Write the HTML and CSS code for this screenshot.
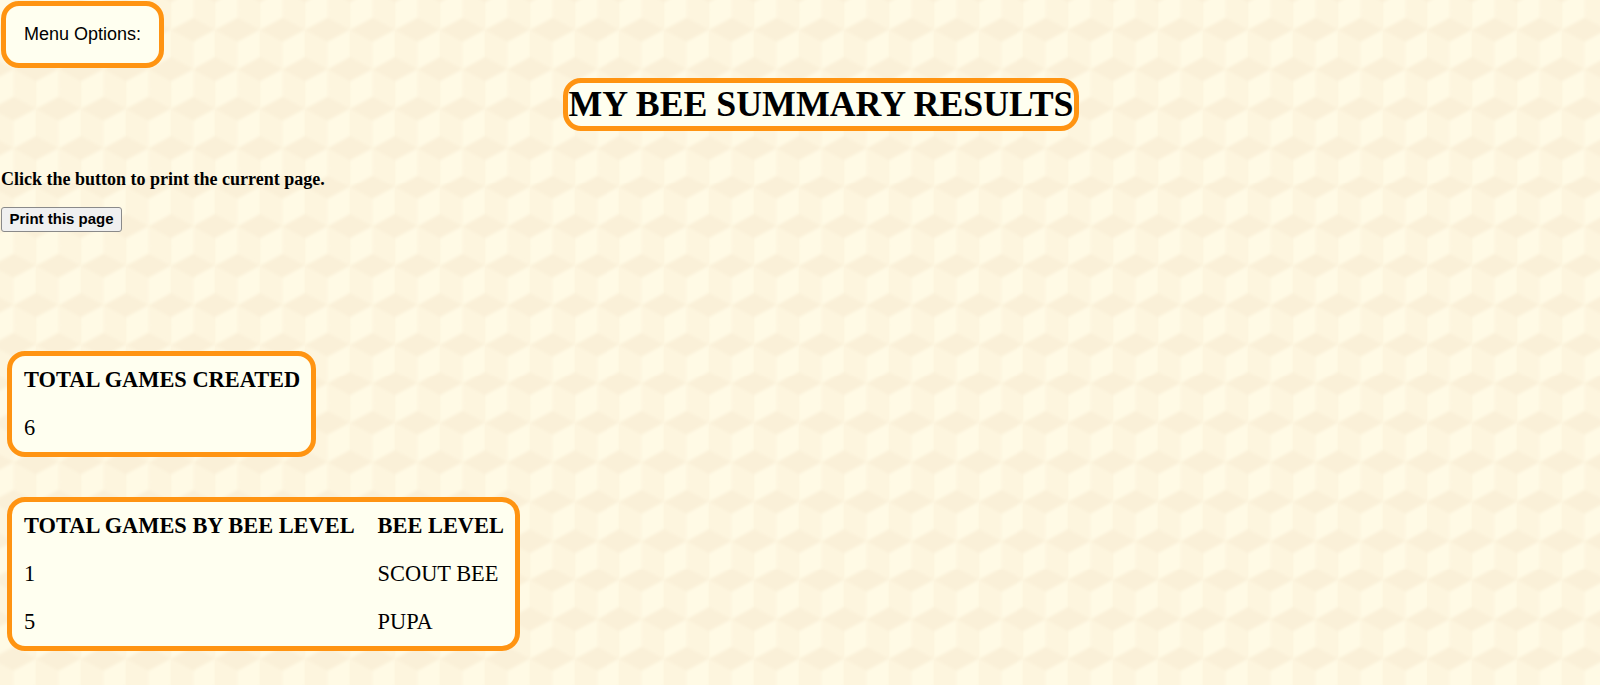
FILE: index.html
```html
<!DOCTYPE html>
<html lang="en">
<head>
    <meta charset="UTF-8">
    <title>My Bee Summary Results</title>
    <link rel="stylesheet" href="styles.css">
</head>
<body>
    <div class="menu">Menu Options:</div>
    <h1><span class="title">MY BEE SUMMARY RESULTS</span></h1>
    <p class="print-note">Click the button to print the current page.</p>
    <button class="print-btn">Print this page</button>

    <table class="summary summary-first">
        <tr><th>TOTAL GAMES CREATED</th></tr>
        <tr><td>6</td></tr>
    </table>

    <table class="summary">
        <tr><th>TOTAL GAMES BY BEE LEVEL</th><th>BEE LEVEL</th></tr>
        <tr><td>1</td><td>SCOUT BEE</td></tr>
        <tr><td>5</td><td>PUPA</td></tr>
    </table>
</body>
</html>
```

FILE: styles.css
```css
body {
    margin: 0;
    padding: 1px 0 0 1px;
    font-family: "Liberation Serif", "Times New Roman", serif;
    color: #000;
    background-color: #fdf5de;
    background-image: url("data:image/svg+xml,%3Csvg xmlns='http://www.w3.org/2000/svg' width='450' height='786' viewBox='0 0 450 786'%3E%3Cdefs%3E%3Cfilter id='b' x='-20%25' y='-20%25' width='140%25' height='140%25'%3E%3CfeGaussianBlur stdDeviation='14'/%3E%3C/filter%3E%3C/defs%3E%3Crect width='450' height='786' fill='%23fdf5de'/%3E%3Cg filter='url(%23b)'%3E%3Cpath fill='%23faf0d8' d='M225 76L450 196 225 316 0 196zM0 469L225 589 0 709-225 589zM450 469L675 589 450 709 225 589z'/%3E%3Cpath fill='%23fffae5' d='M225 316L450 196V469L225 589zM0 709L225 589V862L0 982zM0 -77L225 -197V76L0 196z'/%3E%3C/g%3E%3C/svg%3E");
    background-size: 44.9px 78.6px;
    background-position: -9px 10.4px;
}
.menu {
    box-sizing: border-box;
    width: 163px;
    height: 67px;
    padding: 18px;
    font-family: "Liberation Sans", Arial, sans-serif;
    font-size: 18px;
    line-height: 21px;
    white-space: nowrap;
    background-color: #fffff0;
    border: 5px solid #ff9412;
    border-radius: 18px;
}
h1 {
    margin: 10px 0 0 41px;
    height: 53px;
    font-size: 35.8px;
    line-height: 43px;
    text-align: center;
}
.title {
    display: inline-block;
    padding: 0 1px;
    background-color: #fffff0;
    border: 5px solid #ff9412;
    border-radius: 18px;
}
.print-note {
    margin: 38px 0 17px;
    font-size: 18px;
    font-weight: bold;
    line-height: 21px;
}
.print-btn {
    display: block;
    box-sizing: border-box;
    width: 121px;
    height: 25px;
    padding: 0 0 2px;
    font-family: "Liberation Sans", Arial, sans-serif;
    font-size: 15px;
    font-weight: bold;
    color: #000;
    background-color: #f0f0f0;
    border: 1px solid #8a8a8a;
    border-radius: 3px;
}
.summary {
    margin: 40px 0 0 6px;
    font-size: 22.4px;
    text-align: left;
    background-color: #fffff0;
    border: 5px solid #ff9412;
    border-radius: 18px;
    border-spacing: 0;
}
.summary-first {
    margin-top: 119px;
}
th, td {
    padding: 11px 11px 11px 12px;
    line-height: 26px;
}
```
